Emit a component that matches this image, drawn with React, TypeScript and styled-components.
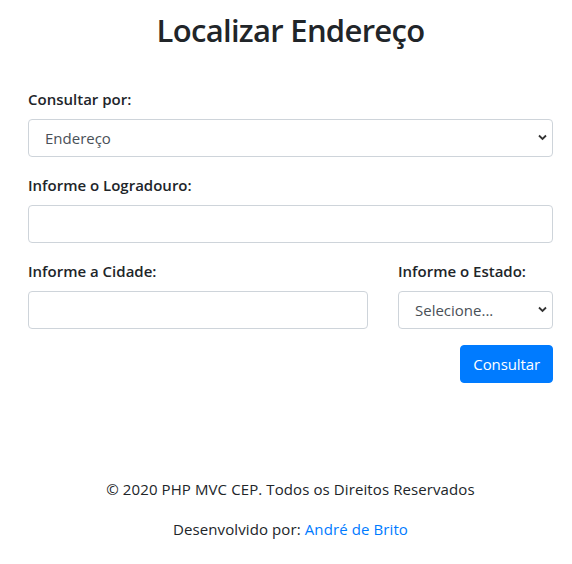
import React from "react";
import styled, { createGlobalStyle } from "styled-components";

const Global = createGlobalStyle`
  html, body { margin: 0; padding: 0; background: #fff; }
  body {
    font-family: "Open Sans", "Noto Sans", "Liberation Sans", sans-serif;
    font-size: 16px;
    line-height: 1.5;
    color: #212529;
  }
  * { box-sizing: border-box; }
`;

const Page = styled.div`
  padding: 12px 19px 0 28px;
`;

const Title = styled.h1`
  margin: 0 0 38px;
  font-size: 31px;
  font-weight: 600;
  line-height: 1.2;
  text-align: center;
  letter-spacing: -0.7px;
`;

const Form = styled.form`
  display: flex;
  flex-direction: column;
`;

const Row = styled.div`
  display: grid;
  grid-template-columns: 340px 1fr;
  column-gap: 30px;
`;

const Group = styled.div`
  display: flex;
  flex-direction: column;
  margin-bottom: 16px;
`;

const Label = styled.label`
  font-size: 15px;
  font-weight: 600;
  line-height: 24px;
  margin-bottom: 8px;
  letter-spacing: 0;
`;

const Input = styled.input`
  height: 38px;
  width: 100%;
  padding: 6px 12px;
  font: inherit;
  font-size: 15px;
  color: #495057;
  border: 1px solid #ced4da;
  border-radius: 4px;
  background: #fff;
  outline: none;
`;

const SelectWrap = styled.div`
  position: relative;
  width: 100%;
`;

const Select = styled.select`
  appearance: none;
  -webkit-appearance: none;
  height: 38px;
  width: 100%;
  padding: 6px 28px 6px 16px;
  font: inherit;
  font-size: 15px;
  color: #495057;
  border: 1px solid #ced4da;
  border-radius: 4px;
  background: #fff;
  outline: none;
`;

const Chevron = styled.svg`
  position: absolute;
  right: 6px;
  top: 15px;
  width: 9px;
  height: 7px;
  pointer-events: none;
`;

const Actions = styled.div`
  display: flex;
  justify-content: flex-end;
`;

const Button = styled.button`
  height: 38px;
  padding: 6px 12px;
  font: inherit;
  font-size: 15px;
  letter-spacing: -0.1px;
  color: #fff;
  background: #007bff;
  border: 1px solid #007bff;
  border-radius: 4px;
`;

const Footer = styled.footer`
  margin-top: 94px;
  text-align: center;
  font-size: 15px;
  letter-spacing: 0.1px;
`;

const FooterLine = styled.p`
  margin: 0 0 16px;
  line-height: 24px;
`;

const Link = styled.a`
  color: #007bff;
  text-decoration: none;
`;

const SelectBox = ({ value }: { value: string }) => (
  <SelectWrap>
    <Select defaultValue={value}>
      <option>{value}</option>
    </Select>
    <Chevron viewBox="0 0 9 7">
      <path d="M1 1.5 L4.5 5 L8 1.5" fill="none" stroke="#333" strokeWidth="1.8" />
    </Chevron>
  </SelectWrap>
);

export default function App() {
  return (
    <>
      <Global />
      <Page>
        <Title>Localizar Endereço</Title>
        <Form onSubmit={(e) => e.preventDefault()}>
          <Group>
            <Label>Consultar por:</Label>
            <SelectBox value="Endereço" />
          </Group>
          <Group>
            <Label>Informe o Logradouro:</Label>
            <Input type="text" />
          </Group>
          <Row>
            <Group>
              <Label>Informe a Cidade:</Label>
              <Input type="text" />
            </Group>
            <Group>
              <Label>Informe o Estado:</Label>
              <SelectBox value="Selecione..." />
            </Group>
          </Row>
          <Actions>
            <Button type="submit">Consultar</Button>
          </Actions>
        </Form>
        <Footer>
          <FooterLine>© 2020 PHP MVC CEP. Todos os Direitos Reservados</FooterLine>
          <FooterLine>
            Desenvolvido por: <Link href="#">André de Brito</Link>
          </FooterLine>
        </Footer>
      </Page>
    </>
  );
}
